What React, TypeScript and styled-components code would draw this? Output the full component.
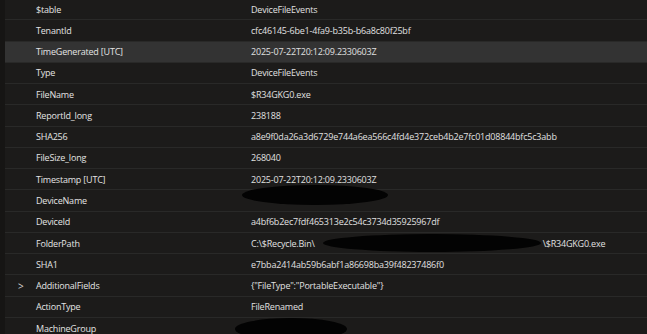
import React from "react";
import styled, { createGlobalStyle } from "styled-components";

const Global = createGlobalStyle`
  html, body { margin: 0; padding: 0; background: #1c1b1a; }
  body { font-family: "Open Sans", "Noto Sans", sans-serif; overflow: hidden; }
`;

const Panel = styled.div`
  width: 647px;
  height: 334px;
  overflow: hidden;
  padding-left: 5px;
  box-sizing: border-box;
  background: linear-gradient(to right, #161514 0 5px, #1c1b1a 5px);
`;

const List = styled.div`
  display: flex;
  flex-direction: column;
  margin-top: -1px;
`;

const Row = styled.div<{ $selected?: boolean }>`
  display: grid;
  grid-template-columns: 31px 215px 1fr;
  align-items: center;
  height: 21.27px;
  box-sizing: border-box;
  border-bottom: 1px solid #292928;
  background: ${(p) => (p.$selected ? "#333333" : "transparent")};
  color: #e2e2e2;
  font-size: 9px;
  letter-spacing: -0.2px;
  white-space: nowrap;
`;

const Chevron = styled.span`
  padding-left: 13px;
  font-size: 10px;
  color: #d6d6d6;
`;

const Key = styled.span`
  color: #e4e4e4;
`;

const Value = styled.span`
  position: relative;
  color: #e0e0e0;
`;

const Redact = styled.span<{ $l: number; $t: number; $w: number; $h: number }>`
  position: absolute;
  left: ${(p) => p.$l}px;
  top: ${(p) => p.$t}px;
  width: ${(p) => p.$w}px;
  height: ${(p) => p.$h}px;
  background: #030303;
  border-radius: 50%;
`;

type Item = {
  k: string;
  v: React.ReactNode;
  selected?: boolean;
  expand?: boolean;
};

const items: Item[] = [
  { k: "$table", v: "DeviceFileEvents" },
  { k: "TenantId", v: "cfc46145-6be1-4fa9-b35b-b6a8c80f25bf" },
  { k: "TimeGenerated [UTC]", v: "2025-07-22T20:12:09.2330603Z", selected: true },
  { k: "Type", v: "DeviceFileEvents" },
  { k: "FileName", v: "$R34GKG0.exe" },
  { k: "ReportId_long", v: "238188" },
  { k: "SHA256", v: "a8e9f0da26a3d6729e744a6ea566c4fd4e372ceb4b2e7fc01d08844bfc5c3abb" },
  { k: "FileSize_long", v: "268040" },
  { k: "Timestamp [UTC]", v: "2025-07-22T20:12:09.2330603Z" },
  {
    k: "DeviceName",
    v: (
      <>
        &nbsp;
        <Redact $l={-9} $t={-9} $w={146} $h={20} />
      </>
    ),
  },
  { k: "DeviceId", v: "a4bf6b2ec7fdf465313e2c54c3734d35925967df" },
  {
    k: "FolderPath",
    v: (
      <>
        C:\$Recycle.Bin\
        <Redact $l={72} $t={-3} $w={218} $h={18} />
        <span style={{ paddingLeft: 228 }}>\$R34GKG0.exe</span>
      </>
    ),
  },
  { k: "SHA1", v: "e7bba2414ab59b6abf1a86698ba39f48237486f0" },
  { k: "AdditionalFields", v: '{"FileType":"PortableExecutable"}', expand: true },
  { k: "ActionType", v: "FileRenamed" },
  {
    k: "MachineGroup",
    v: (
      <>
        &nbsp;
        <Redact $l={-16} $t={-4} $w={112} $h={22} />
      </>
    ),
  },
];

export default function App() {
  return (
    <>
      <Global />
      <Panel>
        <List>
          {items.map((it) => (
            <Row key={it.k} $selected={it.selected}>
              <Chevron>{it.expand ? ">" : ""}</Chevron>
              <Key>{it.k}</Key>
              <Value>{it.v}</Value>
            </Row>
          ))}
        </List>
      </Panel>
    </>
  );
}
